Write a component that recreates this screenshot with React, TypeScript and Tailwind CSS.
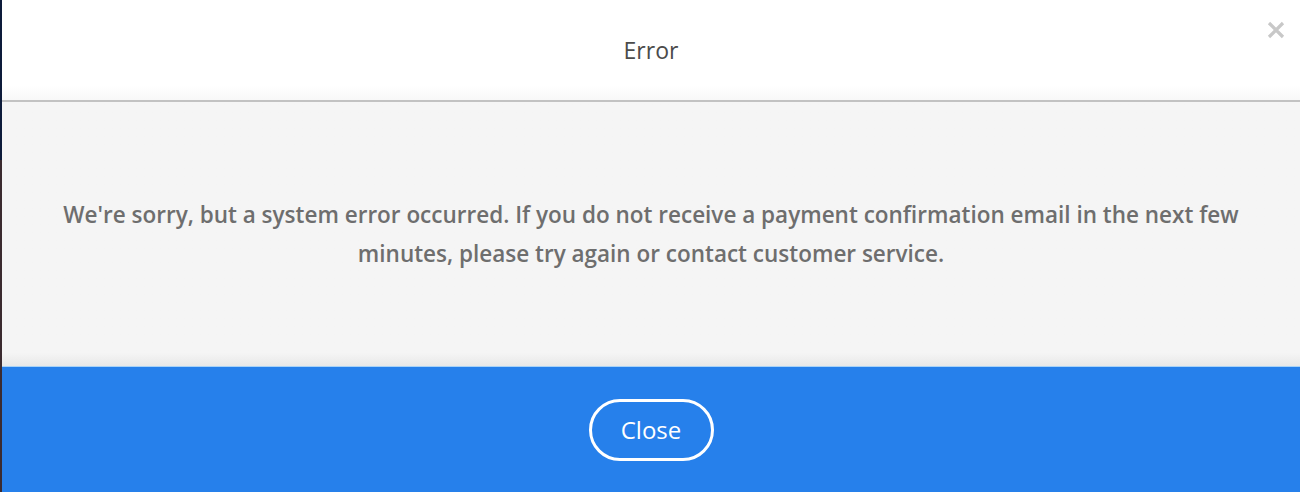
export default function App() {
  return (
    <div className="flex h-[492px] w-[1300px] overflow-hidden bg-white" style={{ fontFamily: '"Open Sans", "Noto Sans", sans-serif' }}>
      <div className="flex w-[2px] flex-col">
        <div className="h-[160px] bg-[#0d1b3a]" />
        <div className="flex-1 bg-[#3b2b30]" />
      </div>
      <div className="flex flex-1 flex-col">
        <header className="relative flex h-[102px] items-center justify-center border-b-2 border-[#c2c2c2] bg-gradient-to-b from-white from-85% to-[#f8f8f8]">
          <h1 className="text-[23px] text-[#4b4b4b]">Error</h1>
          <button className="absolute right-[15px] top-[21px] text-[#c8c8c8]" aria-label="Close dialog">
            <svg width="18" height="18" viewBox="0 0 18 18" fill="none" stroke="currentColor" strokeWidth="3.2">
              <path d="M2 2l14 14M16 2L2 16" />
            </svg>
          </button>
        </header>
        <main className="flex h-[264px] items-center justify-center bg-gradient-to-b from-[#f5f5f5] from-95% to-[#e8e8e8] px-4">
          <p className="text-center text-[22.5px] font-semibold leading-[39px] text-[#6e6e6e]">
            We're sorry, but a system error occurred. If you do not receive a payment confirmation email in the next few
            <br />
            minutes, please try again or contact customer service.
          </p>
        </main>
        <footer className="flex flex-1 items-center justify-center border-t border-[#a9d3f7] bg-[#2680eb]">
          <button className="flex h-[62px] w-[125px] items-center justify-center rounded-full border-[3px] border-white text-[24px] text-white">
            Close
          </button>
        </footer>
      </div>
    </div>
  );
}
